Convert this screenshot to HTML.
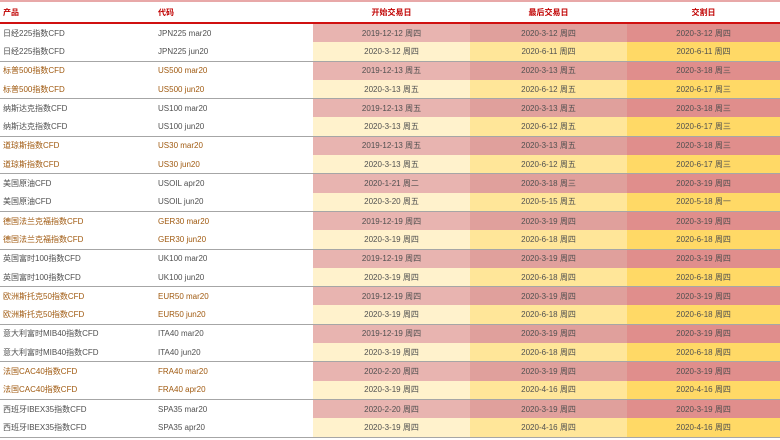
<!DOCTYPE html>
<html><head><meta charset="utf-8"><style>
body{margin:0;width:780px;height:440px;background:#fff;overflow:hidden;font-family:"Liberation Sans","Noto Sans CJK SC",sans-serif;font-size:8px;color:#505050}
table{position:absolute;top:0;left:0;width:780px;border-collapse:collapse;table-layout:fixed;border-top:2px solid #e8a8a8}
th{height:20px;color:#c00000;font-weight:bold;font-size:8px;border-bottom:2px solid #d01010;padding:0}
td{height:18.3px;padding:0;white-space:nowrap;line-height:9px}
th.l,td.l{text-align:left;padding-left:3px}
td.c{text-align:center;color:#505050}
tr.a td.c3{background:#e8b4b0}tr.a td.c4{background:#e0a09c}tr.a td.c5{background:#e08e8c}
tr.b td.c3{background:#fff2cc}tr.b td.c4{background:#ffe699}tr.b td.c5{background:#ffd966}
tr.b td{border-bottom:1px solid #a6a6a6}
tr.br td.l{color:#a05a10}
</style></head><body>
<table>
<colgroup><col style="width:155px"><col style="width:158px"><col style="width:157px"><col style="width:157px"><col style="width:153px"></colgroup>
<tr><th class="l">产品</th><th class="l">代码</th><th>开始交易日</th><th>最后交易日</th><th>交割日</th></tr>
<tr class="a"><td class="l">日经225指数CFD</td><td class="l">JPN225 mar20</td><td class="c c3">2019-12-12 周四</td><td class="c c4">2020-3-12 周四</td><td class="c c5">2020-3-12 周四</td></tr>
<tr class="b"><td class="l">日经225指数CFD</td><td class="l">JPN225 jun20</td><td class="c c3">2020-3-12 周四</td><td class="c c4">2020-6-11 周四</td><td class="c c5">2020-6-11 周四</td></tr>
<tr class="a br"><td class="l">标普500指数CFD</td><td class="l">US500 mar20</td><td class="c c3">2019-12-13 周五</td><td class="c c4">2020-3-13 周五</td><td class="c c5">2020-3-18 周三</td></tr>
<tr class="b br"><td class="l">标普500指数CFD</td><td class="l">US500 jun20</td><td class="c c3">2020-3-13 周五</td><td class="c c4">2020-6-12 周五</td><td class="c c5">2020-6-17 周三</td></tr>
<tr class="a"><td class="l">纳斯达克指数CFD</td><td class="l">US100 mar20</td><td class="c c3">2019-12-13 周五</td><td class="c c4">2020-3-13 周五</td><td class="c c5">2020-3-18 周三</td></tr>
<tr class="b"><td class="l">纳斯达克指数CFD</td><td class="l">US100 jun20</td><td class="c c3">2020-3-13 周五</td><td class="c c4">2020-6-12 周五</td><td class="c c5">2020-6-17 周三</td></tr>
<tr class="a br"><td class="l">道琼斯指数CFD</td><td class="l">US30 mar20</td><td class="c c3">2019-12-13 周五</td><td class="c c4">2020-3-13 周五</td><td class="c c5">2020-3-18 周三</td></tr>
<tr class="b br"><td class="l">道琼斯指数CFD</td><td class="l">US30 jun20</td><td class="c c3">2020-3-13 周五</td><td class="c c4">2020-6-12 周五</td><td class="c c5">2020-6-17 周三</td></tr>
<tr class="a"><td class="l">美国原油CFD</td><td class="l">USOIL apr20</td><td class="c c3">2020-1-21 周二</td><td class="c c4">2020-3-18 周三</td><td class="c c5">2020-3-19 周四</td></tr>
<tr class="b"><td class="l">美国原油CFD</td><td class="l">USOIL jun20</td><td class="c c3">2020-3-20 周五</td><td class="c c4">2020-5-15 周五</td><td class="c c5">2020-5-18 周一</td></tr>
<tr class="a br"><td class="l">德国法兰克福指数CFD</td><td class="l">GER30 mar20</td><td class="c c3">2019-12-19 周四</td><td class="c c4">2020-3-19 周四</td><td class="c c5">2020-3-19 周四</td></tr>
<tr class="b br"><td class="l">德国法兰克福指数CFD</td><td class="l">GER30 jun20</td><td class="c c3">2020-3-19 周四</td><td class="c c4">2020-6-18 周四</td><td class="c c5">2020-6-18 周四</td></tr>
<tr class="a"><td class="l">英国富时100指数CFD</td><td class="l">UK100 mar20</td><td class="c c3">2019-12-19 周四</td><td class="c c4">2020-3-19 周四</td><td class="c c5">2020-3-19 周四</td></tr>
<tr class="b"><td class="l">英国富时100指数CFD</td><td class="l">UK100 jun20</td><td class="c c3">2020-3-19 周四</td><td class="c c4">2020-6-18 周四</td><td class="c c5">2020-6-18 周四</td></tr>
<tr class="a br"><td class="l">欧洲斯托克50指数CFD</td><td class="l">EUR50 mar20</td><td class="c c3">2019-12-19 周四</td><td class="c c4">2020-3-19 周四</td><td class="c c5">2020-3-19 周四</td></tr>
<tr class="b br"><td class="l">欧洲斯托克50指数CFD</td><td class="l">EUR50 jun20</td><td class="c c3">2020-3-19 周四</td><td class="c c4">2020-6-18 周四</td><td class="c c5">2020-6-18 周四</td></tr>
<tr class="a"><td class="l">意大利富时MIB40指数CFD</td><td class="l">ITA40 mar20</td><td class="c c3">2019-12-19 周四</td><td class="c c4">2020-3-19 周四</td><td class="c c5">2020-3-19 周四</td></tr>
<tr class="b"><td class="l">意大利富时MIB40指数CFD</td><td class="l">ITA40 jun20</td><td class="c c3">2020-3-19 周四</td><td class="c c4">2020-6-18 周四</td><td class="c c5">2020-6-18 周四</td></tr>
<tr class="a br"><td class="l">法国CAC40指数CFD</td><td class="l">FRA40 mar20</td><td class="c c3">2020-2-20 周四</td><td class="c c4">2020-3-19 周四</td><td class="c c5">2020-3-19 周四</td></tr>
<tr class="b br"><td class="l">法国CAC40指数CFD</td><td class="l">FRA40 apr20</td><td class="c c3">2020-3-19 周四</td><td class="c c4">2020-4-16 周四</td><td class="c c5">2020-4-16 周四</td></tr>
<tr class="a"><td class="l">西班牙IBEX35指数CFD</td><td class="l">SPA35 mar20</td><td class="c c3">2020-2-20 周四</td><td class="c c4">2020-3-19 周四</td><td class="c c5">2020-3-19 周四</td></tr>
<tr class="b"><td class="l">西班牙IBEX35指数CFD</td><td class="l">SPA35 apr20</td><td class="c c3">2020-3-19 周四</td><td class="c c4">2020-4-16 周四</td><td class="c c5">2020-4-16 周四</td></tr>
</table>
</body></html>
